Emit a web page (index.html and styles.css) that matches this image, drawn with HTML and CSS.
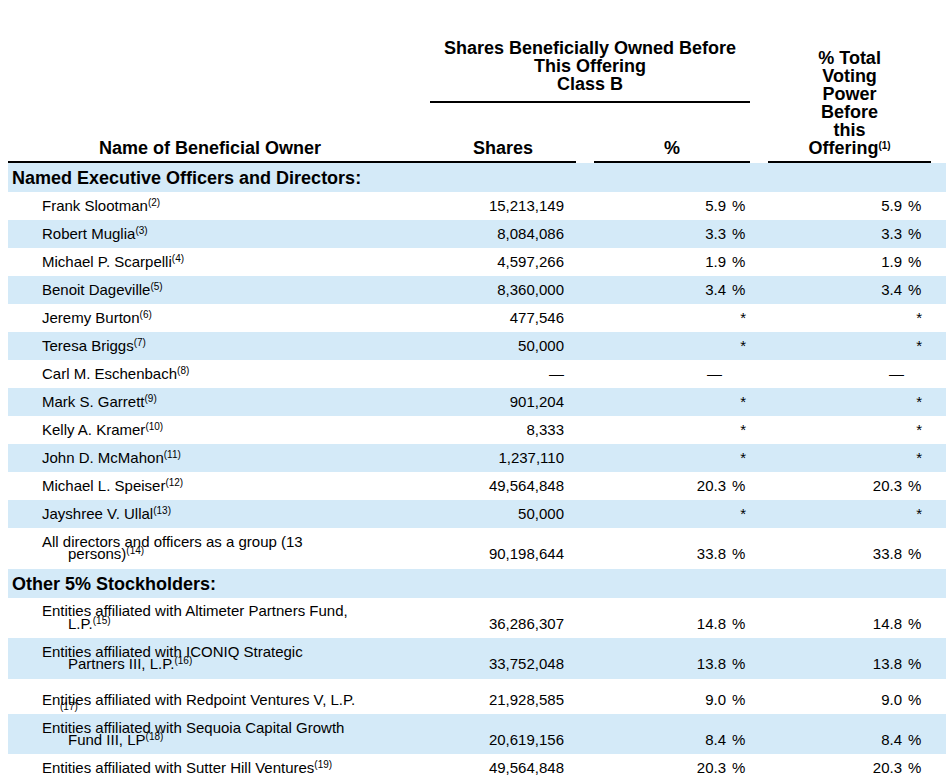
FILE: index.html
```html
<!DOCTYPE html>
<html lang="en">
<head>
<meta charset="utf-8">
<title>Beneficial Ownership</title>
<link rel="stylesheet" href="styles.css">
</head>
<body>
<table class="own">
  <colgroup>
    <col class="c-name">
    <col class="c-shares">
    <col class="c-gap">
    <col class="c-pn">
    <col class="c-ps">
    <col class="c-gap">
    <col class="c-vn">
    <col class="c-vs">
    <col class="c-rest">
  </colgroup>
  <thead>
    <tr>
      <th class="h-blank"></th>
      <th class="h-group" colspan="4">Shares Beneficially Owned Before<br>This Offering<br>Class B</th>
      <th class="h-blank" rowspan="2"></th>
      <th class="h-vote" colspan="2" rowspan="2">% Total<br>Voting<br>Power<br>Before<br>this<br>Offering<sup class="fn">(1)</sup></th>
      <th class="h-blank" rowspan="2"></th>
    </tr>
    <tr>
      <th class="h-name">Name of Beneficial Owner</th>
      <th class="h-col">Shares</th>
      <th class="h-blank"></th>
      <th class="h-col" colspan="2">%</th>
    </tr>
  </thead>
  <tbody>
    <tr class="b"><td class="sec" colspan="9">Named Executive Officers and Directors:</td></tr>
    <tr><td class="name">Frank Slootman<sup class="fn">(2)</sup></td><td class="num">15,213,149</td><td></td><td class="pn">5.9</td><td class="ps">%</td><td></td><td class="pn">5.9</td><td class="ps">%</td><td></td></tr>
    <tr class="b"><td class="name">Robert Muglia<sup class="fn">(3)</sup></td><td class="num">8,084,086</td><td></td><td class="pn">3.3</td><td class="ps">%</td><td></td><td class="pn">3.3</td><td class="ps">%</td><td></td></tr>
    <tr><td class="name">Michael P. Scarpelli<sup class="fn">(4)</sup></td><td class="num">4,597,266</td><td></td><td class="pn">1.9</td><td class="ps">%</td><td></td><td class="pn">1.9</td><td class="ps">%</td><td></td></tr>
    <tr class="b"><td class="name">Benoit Dageville<sup class="fn">(5)</sup></td><td class="num">8,360,000</td><td></td><td class="pn">3.4</td><td class="ps">%</td><td></td><td class="pn">3.4</td><td class="ps">%</td><td></td></tr>
    <tr><td class="name">Jeremy Burton<sup class="fn">(6)</sup></td><td class="num">477,546</td><td></td><td></td><td class="ast">*</td><td></td><td></td><td class="ast v">*</td><td></td></tr>
    <tr class="b"><td class="name">Teresa Briggs<sup class="fn">(7)</sup></td><td class="num">50,000</td><td></td><td></td><td class="ast">*</td><td></td><td></td><td class="ast v">*</td><td></td></tr>
    <tr><td class="name">Carl M. Eschenbach<sup class="fn">(8)</sup></td><td class="num">—</td><td></td><td class="pn dash">—</td><td></td><td></td><td class="pn vdash">—</td><td></td><td></td></tr>
    <tr class="b"><td class="name">Mark S. Garrett<sup class="fn">(9)</sup></td><td class="num">901,204</td><td></td><td></td><td class="ast">*</td><td></td><td></td><td class="ast v">*</td><td></td></tr>
    <tr><td class="name">Kelly A. Kramer<sup class="fn">(10)</sup></td><td class="num">8,333</td><td></td><td></td><td class="ast">*</td><td></td><td></td><td class="ast v">*</td><td></td></tr>
    <tr class="b"><td class="name">John D. McMahon<sup class="fn">(11)</sup></td><td class="num">1,237,110</td><td></td><td></td><td class="ast">*</td><td></td><td></td><td class="ast v">*</td><td></td></tr>
    <tr><td class="name">Michael L. Speiser<sup class="fn">(12)</sup></td><td class="num">49,564,848</td><td></td><td class="pn">20.3</td><td class="ps">%</td><td></td><td class="pn">20.3</td><td class="ps">%</td><td></td></tr>
    <tr class="b"><td class="name">Jayshree V. Ullal<sup class="fn">(13)</sup></td><td class="num">50,000</td><td></td><td></td><td class="ast">*</td><td></td><td></td><td class="ast v">*</td><td></td></tr>
    <tr><td class="name">All directors and officers as a group (13<br>persons)<sup class="fn">(14)</sup></td><td class="num">90,198,644</td><td></td><td class="pn">33.8</td><td class="ps">%</td><td></td><td class="pn">33.8</td><td class="ps">%</td><td></td></tr>
    <tr class="b"><td class="sec" colspan="9">Other 5% Stockholders:</td></tr>
    <tr><td class="name">Entities affiliated with Altimeter Partners Fund,<br>L.P.<sup class="fn">(15)</sup></td><td class="num">36,286,307</td><td></td><td class="pn">14.8</td><td class="ps">%</td><td></td><td class="pn">14.8</td><td class="ps">%</td><td></td></tr>
    <tr class="b"><td class="name">Entities affiliated with ICONIQ Strategic<br>Partners III, L.P.<sup class="fn">(16)</sup></td><td class="num">33,752,048</td><td></td><td class="pn">13.8</td><td class="ps">%</td><td></td><td class="pn">13.8</td><td class="ps">%</td><td></td></tr>
    <tr><td class="name rp">Entities affiliated with Redpoint Ventures V, L.P.<span class="fnline">(17)</span></td><td class="num">21,928,585</td><td></td><td class="pn">9.0</td><td class="ps">%</td><td></td><td class="pn">9.0</td><td class="ps">%</td><td></td></tr>
    <tr class="b"><td class="name">Entities affiliated with Sequoia Capital Growth<br>Fund III, LP<sup class="fn">(18)</sup></td><td class="num">20,619,156</td><td></td><td class="pn">8.4</td><td class="ps">%</td><td></td><td class="pn">8.4</td><td class="ps">%</td><td></td></tr>
    <tr><td class="name">Entities affiliated with Sutter Hill Ventures<sup class="fn">(19)</sup></td><td class="num">49,564,848</td><td></td><td class="pn">20.3</td><td class="ps">%</td><td></td><td class="pn">20.3</td><td class="ps">%</td><td></td></tr>
  </tbody>
</table>
</body>
</html>
```
FILE: styles.css
```css
html, body {
  margin: 0;
  padding: 0;
  background: #ffffff;
}

body {
  margin: 8px 0 0 8px;
  font-family: "Liberation Sans", Arial, Helvetica, sans-serif;
  color: #000000;
}

.own {
  width: 938px;
  table-layout: fixed;
  border-collapse: separate;
  border-spacing: 0;
  font-size: 15px;
}

.c-name { width: 422px; }
.c-shares { width: 146px; }
.c-gap { width: 18px; }
.c-pn { width: 136px; }
.c-ps { width: 20px; }
.c-vn { width: 138px; }
.c-vs { width: 25px; }
.c-rest { width: 15px; }

/* header */
.own th {
  font-size: 18px;
  line-height: 18px;
  font-weight: bold;
  text-align: center;
  vertical-align: bottom;
  padding: 0;
}

.own th.h-group {
  padding: 31px 0 8px;
  border-bottom: 2px solid #000;
}

.own th.h-name {
  padding: 36px 18px 4px 0;
  border-bottom: 2px solid #000;
}

.own th.h-col {
  padding: 36px 0 4px;
  border-bottom: 2px solid #000;
}

.own th.h-vote {
  padding: 0 0 4px;
  border-bottom: 2px solid #000;
}

.fn {
  font-size: 10px;
  line-height: 0;
  vertical-align: baseline;
  position: relative;
  top: -5px;
}

/* body */
.own td {
  padding: 7.75px 0;
  line-height: 12.5px;
  vertical-align: bottom;
  white-space: nowrap;
}

.own tr.b td {
  background: #d4eaf8;
}

.own td.sec {
  font-size: 18px;
  line-height: 18px;
  font-weight: bold;
  padding: 6px 0 5px 4px;
}

.own td.name {
  padding-left: 60px;
  text-indent: -26px;
}

.own td.rp {
  padding-top: 15px;
}

.fnline {
  display: block;
  font-size: 10px;
  line-height: 0;
  text-indent: 0;
  margin-left: -8px;
  position: relative;
  top: 1px;
}

.own td.num {
  text-align: right;
  padding-right: 12px;
}

.own td.pn {
  text-align: right;
  padding-right: 4px;
}

.own td.pn.dash {
  padding-right: 8px;
}

.own td.pn.vdash {
  padding-right: 2px;
}

.own td.ps {
  text-align: left;
  padding-left: 2px;
}

.own td.ast {
  text-align: right;
  padding-right: 4px;
}

.own td.ast.v {
  padding-right: 9px;
}
```
